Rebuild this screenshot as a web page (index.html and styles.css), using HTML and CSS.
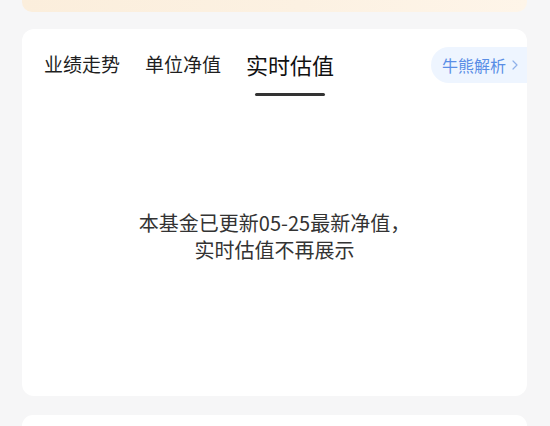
FILE: index.html
```html
<!DOCTYPE html>
<html lang="zh-CN">
<head>
<meta charset="utf-8">
<title>实时估值</title>
<link rel="stylesheet" href="styles.css">
</head>
<body>
<div class="page">
  <div class="card-top"></div>
  <section class="card card-main">
    <div class="tab-row">
      <div class="tabs">
        <div class="tab">业绩走势</div>
        <div class="tab">单位净值</div>
        <div class="tab active">实时估值</div>
      </div>
      <div class="pill">牛熊解析<svg class="chev" width="6" height="10" viewBox="0 0 6 10"><path d="M1 1 L5 5 L1 9" fill="none" stroke="#8fb1ea" stroke-width="1.2" stroke-linecap="round" stroke-linejoin="round"/></svg></div>
    </div>
    <div class="message">
      <p>本基金已更新05-25最新净值，</p>
      <p>实时估值不再展示</p>
    </div>
  </section>
  <section class="card card-next"></section>
</div>
</body>
</html>
```
FILE: styles.css
```css
html, body {
  margin: 0;
  padding: 0;
}
body {
  background: #f6f6f7;
  font-family: "Noto Sans CJK SC", "Noto Sans", sans-serif;
  width: 550px;
  height: 426px;
  overflow: hidden;
}
.page {
  display: flex;
  flex-direction: column;
  padding: 0 23px 0 22px;
}
.card-top {
  height: 12px;
  border-radius: 0 0 10px 10px;
  background: linear-gradient(90deg, #fbeedc 0%, #fcf1e2 55%, #fef5e9 100%);
}
.card {
  background: #ffffff;
  border-radius: 12px;
  overflow: hidden;
}
.card-main {
  margin-top: 17px;
  height: 367px;
}
.card-next {
  margin-top: 19px;
  height: 11px;
  border-radius: 12px 12px 0 0;
}
.tab-row {
  display: flex;
  align-items: center;
  justify-content: space-between;
  padding-top: 18px;
  height: 36px;
}
.tabs {
  display: flex;
  align-items: center;
  gap: 25px;
  padding-left: 22px;
  height: 36px;
  margin-top: -2px;
}
.tab {
  position: relative;
  font-size: 19px;
  line-height: 36px;
  color: #1f1f1f;
}
.tab.active {
  font-size: 22px;
  color: #111111;
}
.tab.active::after {
  content: "";
  position: absolute;
  left: 50%;
  top: calc(100% + 11px);
  width: 70px;
  height: 3px;
  margin-left: -35px;
  border-radius: 2px;
  background: #333333;
}
.pill {
  display: flex;
  align-items: center;
  gap: 6px;
  height: 36px;
  padding: 0 9px 0 11px;
  border-radius: 18px 0 0 18px;
  background: #eef5ff;
  color: #5a8ee6;
  font-size: 16px;
}
.chev {
  display: block;
}
.message {
  margin-top: 126px;
  text-align: center;
  color: #333333;
  font-size: 20px;
  line-height: 27px;
}
.message p {
  margin: 0;
}
```
